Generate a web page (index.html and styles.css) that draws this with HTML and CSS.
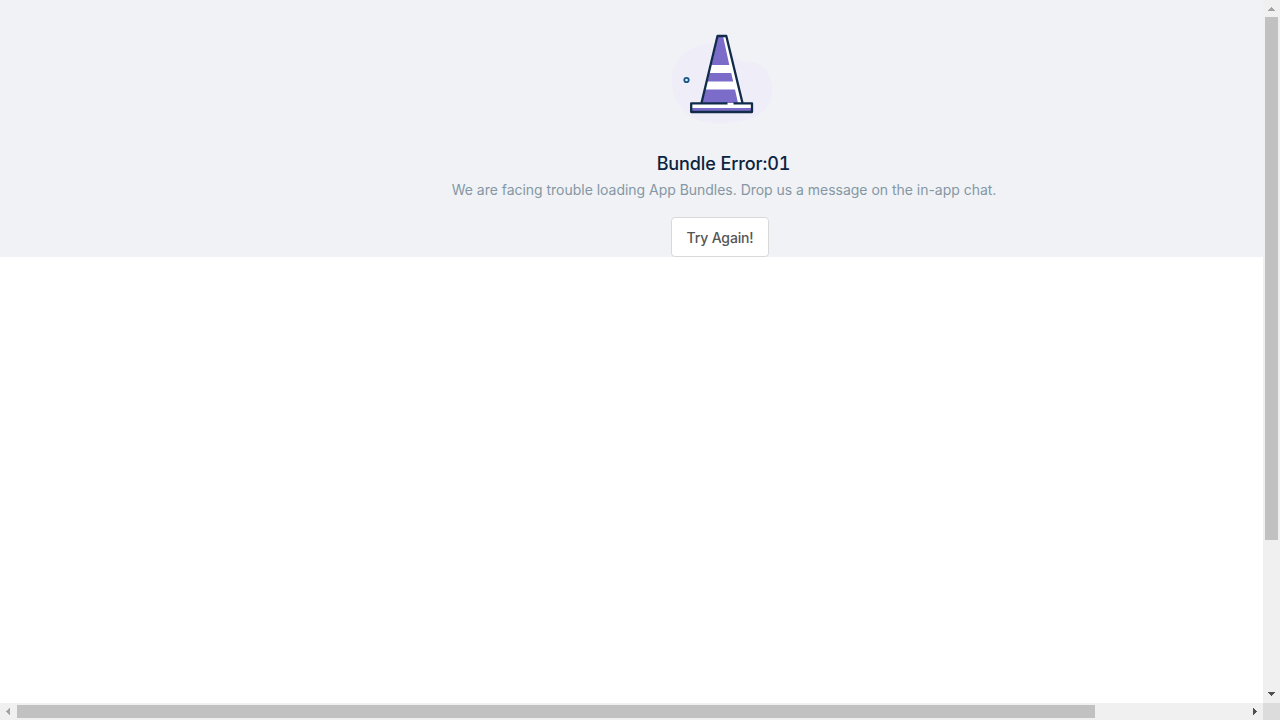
FILE: index.html
```
<!DOCTYPE html>
<html lang="en">
<head>
<meta charset="utf-8">
<title>Bundle Error</title>
<link rel="stylesheet" href="styles.css">
</head>
<body>
<div class="frame">
  <main class="page">
    <section class="error">
      <svg class="cone" width="102" height="94" viewBox="0 0 102 94">
        <path class="blob" d="M40 12C18 14 0 28 -.5 49C0 69 12 92 45 92.500C62 93 74 90 86 84C97 78 102 67 100 54C97 38 86 29 74 31C61 33 64 12 40 12Z"/>
        <path class="white" d="M45 5H54L71 72H79.500V81H19V72H29Z"/>
        <path class="purple" d="M46 5H51L57.300 34H39.500ZM37.500 42H59.200L61.200 50.500H35.500ZM33.500 58.500H63L66 72H30ZM20 77H79.500V80H20Z"/>
        <path class="line" d="M29.500 72L45.500 5H54.300L70.500 72"/>
        <path class="line" d="M55.500 72.300H19.200V81H80V72.300H61.500"/>
        <circle class="ring" cx="14.500" cy="49" r="2.200"/>
      </svg>
      <h1 class="title">Bundle Error:01</h1>
      <p class="message">We are facing trouble loading App Bundles. Drop us a message on the in-app chat.</p>
      <button class="retry">Try Again!</button>
    </section>
  </main>
  <div class="bar bar-v">
    <svg class="arrow dim" width="17" height="17" shape-rendering="crispEdges"><path d="M8 7h1v1h1v1h1v1h1v1H5v-1h1V9h1V8h1z"/></svg>
    <div class="thumb-v"></div>
    <svg class="arrow" width="17" height="17" shape-rendering="crispEdges"><path d="M5 6h7v1h-1v1h-1v1H9v1H8V9H7V8H6V7H5z"/></svg>
  </div>
  <div class="bar bar-h">
    <svg class="arrow dim" width="17" height="17" shape-rendering="crispEdges"><path d="M10 5v7H9v-1H8v-1H7V9H6V8h1V7h1V6h1V5z"/></svg>
    <div class="thumb-h"></div>
    <svg class="arrow" width="17" height="17" shape-rendering="crispEdges"><path d="M7 5h1v1h1v1h1v1h1v1h-1v1H9v1H8v1H7z"/></svg>
  </div>
  <div class="corner"></div>
</div>
</body>
</html>
```
FILE: styles.css
```
body { margin: 0; background: #fff; font-family: Inter, sans-serif; overflow: hidden; }
.frame { display: grid; grid-template: 703px 17px / 1263px 17px; width: 1280px; height: 720px; }
.page { overflow: hidden; background: #fff; }
.error { display: flex; flex-direction: column; align-items: center; width: 1440px; height: 257px; padding-top: 31px; box-sizing: border-box; background: #f0f2f5; }
.cone { display: block; margin-left: 5.500px; flex: none; overflow: visible; }
.blob { fill: #efedf8; }
.white { fill: #fff; }
.purple { fill: #7b6cc9; }
.line { fill: none; stroke: #112b4a; stroke-width: 2.3; stroke-linejoin: round; }
.ring { fill: #e5f4fb; stroke: #165487; stroke-width: 1.8; }
.title { margin: 27px 0 0 7px; font-size: 18px; line-height: 24px; font-weight: 500; letter-spacing: -.1px; font-variant-numeric: tabular-nums; color: #0c2340; }
.message { margin: 4px 0 0 8px; font-size: 14px; line-height: 20px; letter-spacing: -.025px; color: #8597a4; white-space: nowrap; }
.retry { display: block; flex: none; width: 98px; height: 40px; margin-top: 17px; padding: 2px 0 0; box-sizing: border-box; border: 1px solid #d9d9d9; border-radius: 4px; background: #fff; font: 500 14px/20px Inter, sans-serif; letter-spacing: -.15px; color: #555; }
.bar { display: flex; background: #f0f0f0; }
.bar-v { flex-direction: column; justify-content: flex-start; }
.bar-v .arrow:last-child { margin-top: auto; }
.bar-h .arrow:last-child { margin-left: auto; }
.arrow { display: block; flex: none; fill: #505050; }
.dim { fill: #a3a3a3; }
.thumb-v { width: 13px; height: 523px; margin: 0 2px; background: #c1c1c1; }
.thumb-h { width: 1078px; height: 13px; margin: 2px 0; background: #c1c1c1; }
.corner { background: #dcdcdc; }
```
